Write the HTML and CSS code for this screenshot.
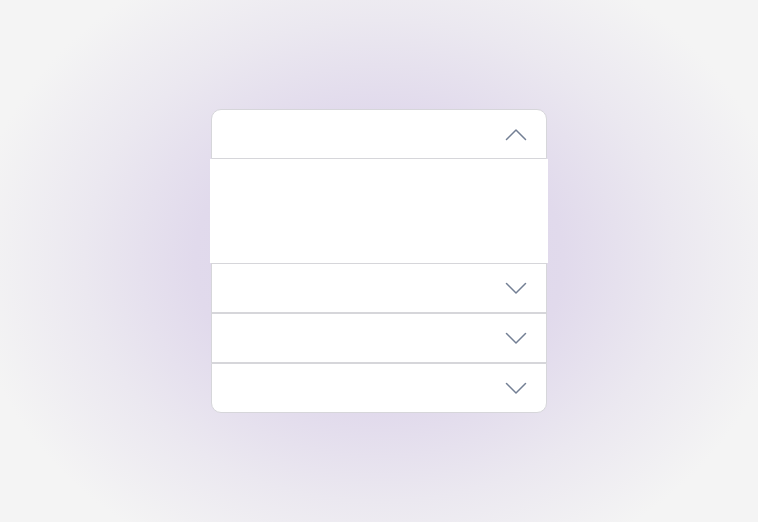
FILE: index.html
```html
<!DOCTYPE html>
<html lang="en">
<head>
    <meta charset="UTF-8">
    <meta name="viewport" content="width=device-width, initial-scale=1.0">
    <title>Accordion</title>
    <link rel="stylesheet" href="styles.css">
</head>
<body>
    <div class="accordion">
        <div class="accordion-item first open">
            <button class="accordion-header" aria-expanded="true">
                <svg class="chevron" width="22" height="13" viewBox="0 0 22 13"><path d="M1.5 11.5 L11 2 L20.5 11.5" /></svg>
            </button>
        </div>
        <div class="accordion-panel"></div>
        <div class="accordion-item">
            <button class="accordion-header" aria-expanded="false">
                <svg class="chevron" width="22" height="13" viewBox="0 0 22 13"><path d="M1.5 1.5 L11 11 L20.5 1.5" /></svg>
            </button>
        </div>
        <div class="accordion-item">
            <button class="accordion-header" aria-expanded="false">
                <svg class="chevron" width="22" height="13" viewBox="0 0 22 13"><path d="M1.5 1.5 L11 11 L20.5 1.5" /></svg>
            </button>
        </div>
        <div class="accordion-item last">
            <button class="accordion-header" aria-expanded="false">
                <svg class="chevron" width="22" height="13" viewBox="0 0 22 13"><path d="M1.5 1.5 L11 11 L20.5 1.5" /></svg>
            </button>
        </div>
    </div>
</body>
</html>
```

FILE: styles.css
```css
:root {
    --page-bg: #f4f4f4;
    --glow: #dbd3ea;
    --white: #fff;
    --border: #d6d6da;
    --icon: #737f94;
    --radius: 10px;
}

html, body {
    height: 100%;
}

body {
    margin: 0;
    font-family: "Liberation Sans", Arial, sans-serif;
    background: radial-gradient(ellipse 54% 64% at 50% 50%, var(--glow) 0%, #e1daec 45%, #ebe8f0 72%, var(--page-bg) 100%);
    display: flex;
    align-items: center;
    justify-content: center;
}

.accordion {
    width: 336px;
    display: flex;
    flex-direction: column;
}

.accordion-item {
    background-color: var(--white);
    border: 1px solid var(--border);
}

.accordion-item.first {
    border-radius: var(--radius) var(--radius) 0 0;
}

.accordion-item.last {
    border-radius: 0 0 var(--radius) var(--radius);
}

.accordion-header {
    width: 100%;
    height: 48px;
    padding: 0 19px 0 0;
    border: none;
    background: transparent;
    display: flex;
    align-items: center;
    justify-content: flex-end;
    cursor: pointer;
}

.chevron path {
    fill: none;
    stroke: var(--icon);
    stroke-width: 1.5;
    stroke-linecap: round;
    stroke-linejoin: round;
}

.accordion-panel {
    height: 104px;
    margin: 0 -1px;
    background-color: var(--white);
}
```
